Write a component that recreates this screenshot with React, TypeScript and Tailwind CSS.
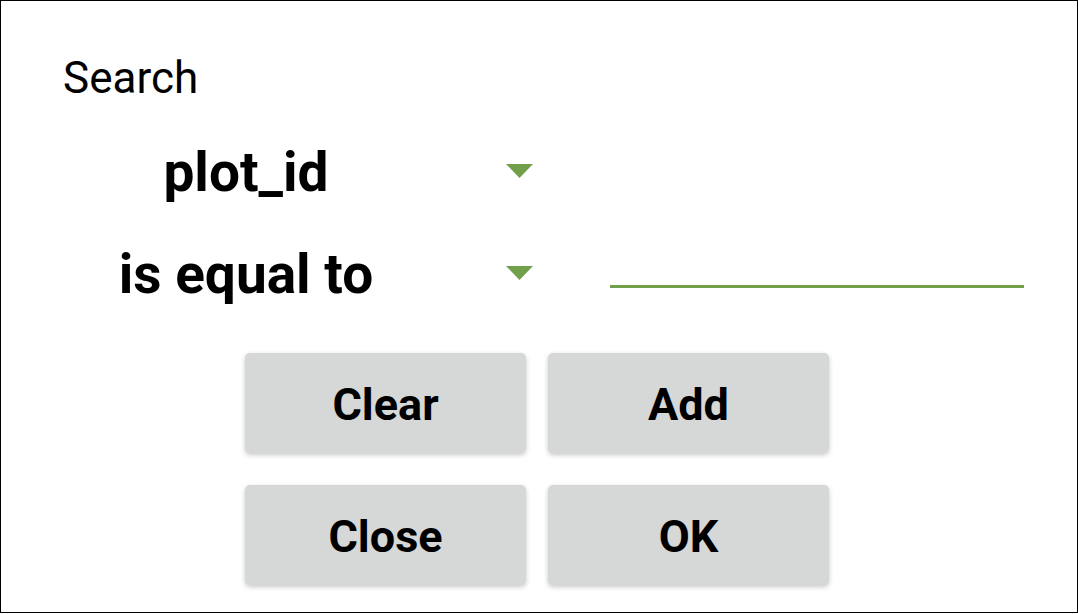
import React from 'react'

function Caret({ className = '' }: { className?: string }) {
  return (
    <svg className={className} width="27" height="14" viewBox="0 0 27 14">
      <polygon points="0,0 27,0 13.5,14" fill="#72a04a" />
    </svg>
  )
}

function Spinner({ label }: { label: string }) {
  return (
    <div className="flex items-start">
      <div className="w-[364px] text-center text-[55px] leading-[55px] font-bold text-black">{label}</div>
      <Caret className="ml-[78px] mt-[19px] shrink-0" />
    </div>
  )
}

function DialogButton({ label }: { label: string }) {
  return (
    <button
      type="button"
      className="w-[281px] h-[100px] pt-[4px] rounded-[5px] bg-[#d6d7d7] text-[45px] font-bold text-black shadow-[0_2px_5px_rgba(0,0,0,0.22)]"
    >
      {label}
    </button>
  )
}

export default function App() {
  return (
    <div
      className="w-[1078px] h-[613px] bg-white border border-black box-border overflow-hidden"
      style={{ fontFamily: 'Roboto, "Liberation Sans", sans-serif' }}
    >
      <div className="pl-[62px]">
        <div className="mt-[55px] h-[44px] text-[44px] leading-[44px] text-black">Search</div>

        {/* field selector */}
        <div className="mt-[45px] h-[55px] pl-[1px]">
          <Spinner label="plot_id" />
        </div>

        {/* operator selector + value input */}
        <div className="mt-[47px] h-[55px] pl-[1px] flex items-start">
          <Spinner label="is equal to" />
          <div className="ml-[77px] mt-[38px] w-[414px] h-[3px] bg-[#72a04a]" />
        </div>
      </div>

      <div className="mt-[51px] pl-[244px] grid grid-cols-[281px_281px] gap-x-[22px] gap-y-[32px]">
        <DialogButton label="Clear" />
        <DialogButton label="Add" />
        <DialogButton label="Close" />
        <DialogButton label="OK" />
      </div>
    </div>
  )
}
